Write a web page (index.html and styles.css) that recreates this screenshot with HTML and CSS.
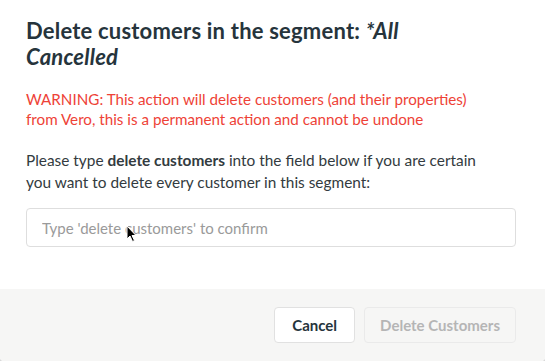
FILE: index.html
```html
<!DOCTYPE html>
<html lang="en">
<head>
  <meta charset="UTF-8" />
  <meta name="viewport" content="width=device-width, initial-scale=1" />
  <title>Delete customers</title>
  <link rel="stylesheet" href="styles.css">
</head>
<body>

  <div class="modal">
    <div class="modal-body">
      <h2>Delete customers in the segment: <em>*All Cancelled</em></h2>
      <p class="warning">WARNING: This action will delete customers (and their properties) from Vero, this is a permanent action and cannot be undone</p>
      <p class="note">Please type <strong>delete customers</strong> into the field below if you are certain you want to delete every customer in this segment:</p>
      <div class="field">
        <input type="text" placeholder="Type 'delete customers' to confirm" />
        <svg class="cursor" width="12" height="18" viewBox="0 0 12 18">
          <path d="M1 1 L1 14 L4 11 L6.5 16.5 L8.5 15.5 L6 10.5 L10 10.5 Z" fill="#000" stroke="#fff" stroke-width="1"/>
        </svg>
      </div>
    </div>
    <div class="modal-footer">
      <button class="btn">Cancel</button>
      <button class="btn btn-danger" disabled>Delete Customers</button>
    </div>
  </div>

</body>
</html>
```

FILE: styles.css
```css
body {
  margin: 0;
  padding: 0;
  background-color: #d9d9d9;
  font-family: Lato, 'Open Sans', sans-serif;
}

.modal {
  width: 545px;
  height: 361px;
  background-color: #ffffff;
  border-radius: 0 0 4px 4px;
  overflow: hidden;
  display: flex;
  flex-direction: column;
}

.modal-body {
  padding: 18px 29px 0 26px;
  flex: 1;
}

h2,
.warning,
.note {
  max-width: 462px;
}

h2 {
  margin: 0;
  font-size: 22px;
  line-height: 26px;
  font-weight: 700;
  letter-spacing: 0.2px;
  color: #26343c;
}

h2 em {
  font-style: italic;
}

.warning {
  margin: 19px 0 0;
  font-size: 15.2px;
  line-height: 20px;
  color: #ee4237;
}

.note {
  margin: 20px 0 0;
  font-size: 15.4px;
  line-height: 22px;
  color: #333b40;
}

.note strong {
  font-weight: 700;
}

.field {
  position: relative;
  margin-top: 15px;
}

.field input {
  box-sizing: border-box;
  width: 100%;
  height: 39px;
  padding: 0 15px;
  border: 1px solid #dedede;
  border-radius: 4px;
  font-family: inherit;
  font-size: 15px;
  color: #333;
}

.field input::placeholder {
  color: #9a9a9a;
}

.cursor {
  position: absolute;
  left: 100px;
  top: 17px;
}

.modal-footer {
  height: 72px;
  background-color: #f6f6f5;
  display: flex;
  justify-content: flex-end;
  align-items: center;
  gap: 9px;
  padding: 0 29px 0 0;
}

.btn {
  height: 36px;
  padding: 0 17px;
  background-color: #ffffff;
  border: 1px solid #e1e1e1;
  border-radius: 4px;
  font-family: inherit;
  font-size: 15px;
  font-weight: 700;
  color: #26343c;
  cursor: pointer;
}

.btn-danger {
  padding: 0 15px;
  background-color: #f6f6f5;
  border-color: #eaeaea;
  color: #b5b5b5;
  cursor: default;
}
```
